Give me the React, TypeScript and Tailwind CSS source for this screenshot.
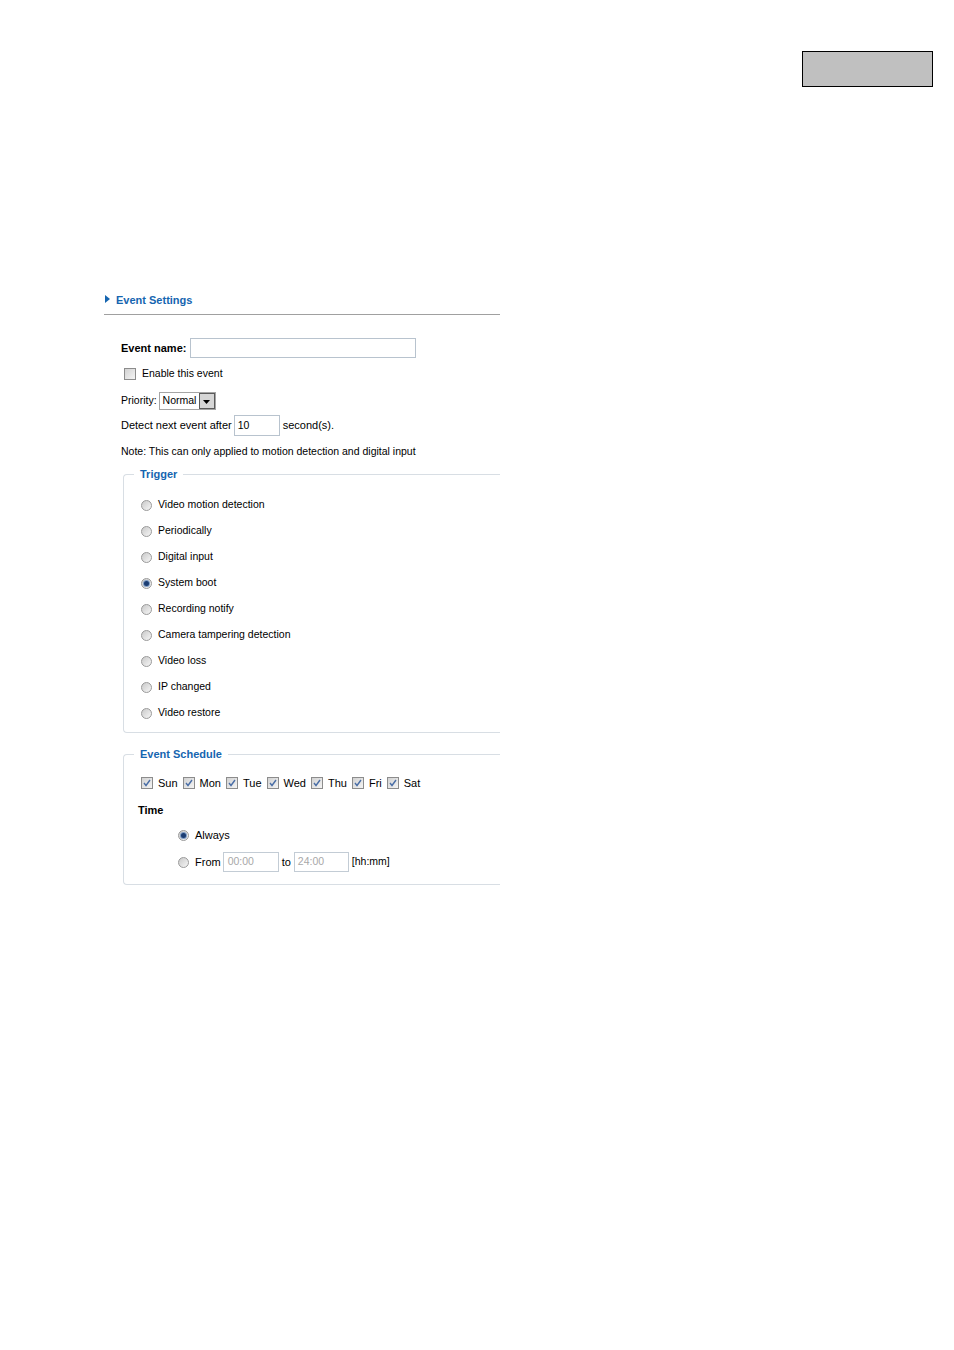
import { memo } from "react";

const FONT = "font-['Liberation_Sans',Arial,sans-serif]";

const TRIGGERS = [
    { label: "Video motion detection", checked: false },
    { label: "Periodically", checked: false },
    { label: "Digital input", checked: false },
    { label: "System boot", checked: true },
    { label: "Recording notify", checked: false },
    { label: "Camera tampering detection", checked: false },
    { label: "Video loss", checked: false },
    { label: "IP changed", checked: false },
    { label: "Video restore", checked: false },
];

const DAYS = ["Sun", "Mon", "Tue", "Wed", "Thu", "Fri", "Sat"];

const Radio = memo(({ checked }: { checked?: boolean }) => (
    <span className="flex items-center justify-center w-[11px] h-[11px] rounded-full border border-[#9a9a9a] bg-gradient-to-br from-[#c9c9c9] to-[#f7f7f7] flex-shrink-0">
        {checked && (
            <span className="w-[5px] h-[5px] rounded-full bg-[#1b3d73] shadow-[0_0_0_1px_#7e9cc4]" />
        )}
    </span>
));

const Checkbox = memo(({ checked }: { checked?: boolean }) => (
    <span className="flex items-center justify-center w-[12px] h-[12px] border border-[#8c8c8c] bg-gradient-to-br from-[#d2d2d2] to-[#f4f4f4] flex-shrink-0">
        {checked && (
            <svg width="8" height="8" viewBox="0 0 8 8">
                <path d="M1 4 L3 6.5 L7 1" fill="none" stroke="#4a6ea6" strokeWidth="1.4" />
            </svg>
        )}
    </span>
));

const Legend = ({ children }: { children: string }) => (
    <legend className="ml-[10px] px-[6px] text-[11px] leading-[14px] font-bold text-[#1565b0]">
        {children}
    </legend>
);

export default function App() {
    return (
        <div className={`${FONT} w-[954px] h-[1350px] bg-white text-[11px] text-black`}>
            <div className="flex justify-end pt-[51px] pr-[21px]">
                <div className="w-[131px] h-[36px] border border-black bg-[#c0c0c0]" />
            </div>

            <div className="ml-[104px] w-[396px] mt-[203px]">
                <div className="flex items-center h-[20px]">
                    <svg width="5" height="8" viewBox="0 0 5 8" className="ml-[1px] mb-[3px]">
                        <path d="M0 0 L5 4 L0 8 Z" fill="#1565b0" />
                    </svg>
                    <span className="ml-[6px] font-bold text-[#1565b0]">Event Settings</span>
                </div>
                <div className="mt-[4px] h-px bg-[#a0a0a0]" />

                <div className="pl-[17px]">
                    <div className="mt-[23px] flex items-center h-[20px]">
                        <span className="font-bold">Event name:</span>
                        <span className="ml-[4px] w-[226px] h-[20px] border border-[#b8c3ce]" />
                    </div>

                    <div className="mt-[8px] flex items-center h-[16px] pl-[3px] text-[10.5px]">
                        <Checkbox />
                        <span className="ml-[6px]">Enable this event</span>
                    </div>

                    <div className="mt-[10px] flex items-center h-[18px] text-[10.5px]">
                        <span>Priority:</span>
                        <span className="ml-[2px] flex items-center w-[57px] h-[18px] border border-[#a5a5a5] pl-[3px]">
                            <span className="flex-1">Normal</span>
                            <span className="flex items-center justify-center w-[16px] h-[16px] border border-[#5a5a5a] bg-[#d6d6d6]">
                                <svg width="7" height="4" viewBox="0 0 7 4" className="mt-[2px]">
                                    <path d="M0 0 L7 0 L3.5 4 Z" fill="#000" />
                                </svg>
                            </span>
                        </span>
                    </div>

                    <div className="mt-[5px] flex items-center h-[21px]">
                        <span>Detect next event after</span>
                        <span className="ml-[2px] flex items-center w-[46px] h-[21px] border border-[#b8c3ce] pl-[3px] text-[10.5px]">10</span>
                        <span className="ml-[3px]">second(s).</span>
                    </div>

                    <div className="mt-[9px] flex items-center h-[14px] text-[10.5px]">
                        Note: This can only applied to motion detection and digital input
                    </div>
                </div>

                <fieldset className="mt-[8px] ml-[19px] border border-r-0 border-[#d8dee4] rounded-l-[4px]">
                    <Legend>Trigger</Legend>
                    <div className="pl-[17px] pt-[11px] pb-[6px] text-[10.5px]">
                        {TRIGGERS.map((t) => (
                            <div key={t.label} className="flex items-center h-[26px]">
                                <Radio checked={t.checked} />
                                <span className="ml-[6px]">{t.label}</span>
                            </div>
                        ))}
                    </div>
                </fieldset>

                <fieldset className="mt-[14px] ml-[19px] border border-r-0 border-[#d8dee4] rounded-l-[4px]">
                    <Legend>Event Schedule</Legend>
                    <div className="pl-[14px] pt-[14px] pb-[12px]">
                        <div className="flex items-center h-[16px] pl-[3px]">
                            {DAYS.map((d) => (
                                <span key={d} className="flex items-center mr-[5px]">
                                    <Checkbox checked />
                                    <span className="ml-[5px]">{d}</span>
                                </span>
                            ))}
                        </div>

                        <div className="mt-[11px] flex items-center h-[16px] font-bold">Time</div>

                        <div className="pl-[40px]">
                            <div className="mt-[9px] flex items-center h-[16px]">
                                <Radio checked />
                                <span className="ml-[6px]">Always</span>
                            </div>
                            <div className="mt-[9px] flex items-center h-[20px]">
                                <Radio />
                                <span className="ml-[6px]">From</span>
                                <span className="ml-[2px] flex items-center w-[56px] h-[20px] border border-[#c3ccd5] pl-[4px] text-[10.5px] text-[#a8a8a8]">00:00</span>
                                <span className="ml-[3px]">to</span>
                                <span className="ml-[3px] flex items-center w-[55px] h-[20px] border border-[#c3ccd5] pl-[3px] text-[10.5px] text-[#a8a8a8]">24:00</span>
                                <span className="ml-[3px] text-[10.5px]">[hh:mm]</span>
                            </div>
                        </div>
                    </div>
                </fieldset>
            </div>
        </div>
    );
}
